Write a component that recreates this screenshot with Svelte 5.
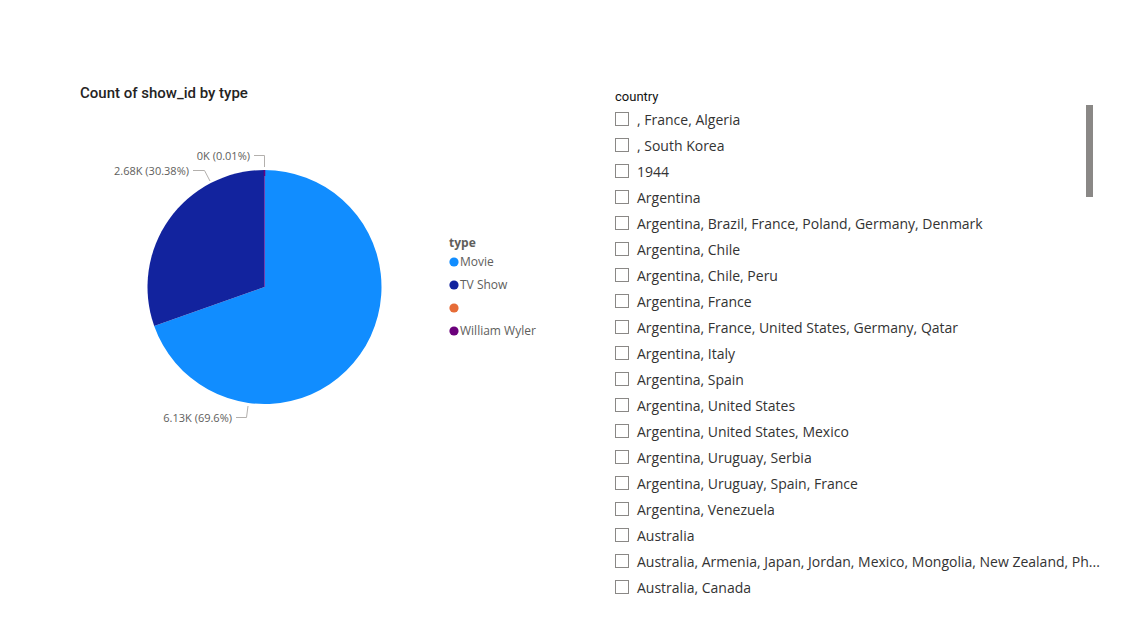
<script>
  const countries = [
    ', France, Algeria',
    ', South Korea',
    '1944',
    'Argentina',
    'Argentina, Brazil, France, Poland, Germany, Denmark',
    'Argentina, Chile',
    'Argentina, Chile, Peru',
    'Argentina, France',
    'Argentina, France, United States, Germany, Qatar',
    'Argentina, Italy',
    'Argentina, Spain',
    'Argentina, United States',
    'Argentina, United States, Mexico',
    'Argentina, Uruguay, Serbia',
    'Argentina, Uruguay, Spain, France',
    'Argentina, Venezuela',
    'Australia',
    'Australia, Armenia, Japan, Jordan, Mexico, Mongolia, New Zealand, Ph...',
    'Australia, Canada',
  ];

  const legend = [
    { name: 'Movie', color: '#118dff' },
    { name: 'TV Show', color: '#12239e' },
    { name: '', color: '#e66c37' },
    { name: 'William Wyler', color: '#6b007b' },
  ];

  let selected = $state([]);

  // Pie geometry: centre, radius and the Movie share, clockwise from the top
  const cx = 154.5;
  const cy = 142;
  const r = 117;
  const angle = 0.696 * 2 * Math.PI;
  const ex = cx + r * Math.sin(angle);
  const ey = cy - r * Math.cos(angle);
  const movie = `M${cx} ${cy}V${cy - r}A${r} ${r} 0 1 1 ${ex} ${ey}Z`;
  const tv = `M${cx} ${cy}L${ex} ${ey}A${r} ${r} 0 0 1 ${cx} ${cy - r}Z`;
</script>

<main class="report">
  <section class="chart">
    <h2>Count of show_id by type</h2>
    <div class="plot">
      <svg class="pie" width="290" height="290" viewBox="0 0 290 290" role="img" aria-label="Count of show_id by type">
        <path d={movie} fill="#118dff" />
        <path d={tv} fill="#12239e" />
        <path d="M154.500 142V31" stroke="#6f3fae" />
        <path d="M154.500 31V25" stroke="#6b007b" stroke-width="1.500" />
        <g class="leader">
          <path d="M144 10.500H154.500V22" />
          <path d="M83 25.500H94.500L100 36" />
          <path d="M126 272.500H136.500L138 261" />
        </g>
        <g class="label">
          <text x="140" y="15">0K (0.01%)</text>
          <text x="79" y="30">2.68K (30.38%)</text>
          <text x="122" y="277">6.13K (69.6%)</text>
        </g>
      </svg>
      <div class="legend">
        <h3>type</h3>
        <ul>
          {#each legend as item}
            <li>
              <svg width="10" height="10" viewBox="0 0 10 10" aria-hidden="true">
                <circle cx="5" cy="5" r="4.600" fill={item.color} />
              </svg>
              <span>{item.name}</span>
            </li>
          {/each}
        </ul>
      </div>
    </div>
  </section>

  <fieldset class="slicer">
    <legend>country</legend>
    <div class="body">
      <div class="rows">
        {#each countries as country}
          <label>
            <input type="checkbox" value={country} bind:group={selected} />
            <span>{country}</span>
          </label>
        {/each}
      </div>
      <div class="thumb"></div>
    </div>
  </fieldset>
</main>

<style>
  :global(body) {
    margin: 0;
    background: #fff;
  }
  .report {
    display: grid;
    grid-template-columns: 535fr 478fr;
    padding: 83px 54px 40px 80px;
    font-family: 'Open Sans', 'Noto Sans', sans-serif;
  }
  h2,
  h3,
  ul {
    margin: 0;
    padding: 0;
  }
  h2 {
    font: 500 15px/20px Roboto, sans-serif;
    color: #252423;
  }
  .plot {
    display: flex;
    padding: 42px 0 0 30px;
  }
  .pie {
    flex: none;
    overflow: visible;
  }
  .leader path {
    fill: none;
    stroke: #b3b0ad;
  }
  .label text {
    font-size: 11px;
    fill: #605e5c;
    text-anchor: end;
  }
  .legend {
    padding: 91px 0 0 49px;
    font-size: 12px;
    color: #605e5c;
  }
  h3 {
    font-size: 12px;
    line-height: 14px;
  }
  ul {
    list-style: none;
  }
  li {
    display: flex;
    align-items: center;
    gap: 1px;
    height: 23px;
    white-space: nowrap;
  }
  .slicer {
    min-width: 0;
    margin: 0;
    padding: 6px 0 0;
    border: 0;
  }
  .slicer legend {
    float: left;
    padding: 0;
    font: 400 13px/16px Roboto, sans-serif;
    color: #111;
  }
  .body {
    clear: both;
    display: flex;
    justify-content: space-between;
  }
  .rows {
    flex: 1;
    min-width: 0;
    padding-top: 1px;
  }
  label {
    display: flex;
    align-items: center;
    gap: 8px;
    height: 26px;
    font-size: 14px;
    color: #333;
    white-space: nowrap;
  }
  input {
    appearance: none;
    flex: none;
    box-sizing: border-box;
    width: 14px;
    height: 14px;
    margin: 0;
    border: 1px solid #8a8886;
    background: #fff;
  }
  input:checked {
    background: #333;
  }
  .thumb {
    flex: none;
    width: 7px;
    height: 92px;
    background: #8a8886;
  }
</style>
